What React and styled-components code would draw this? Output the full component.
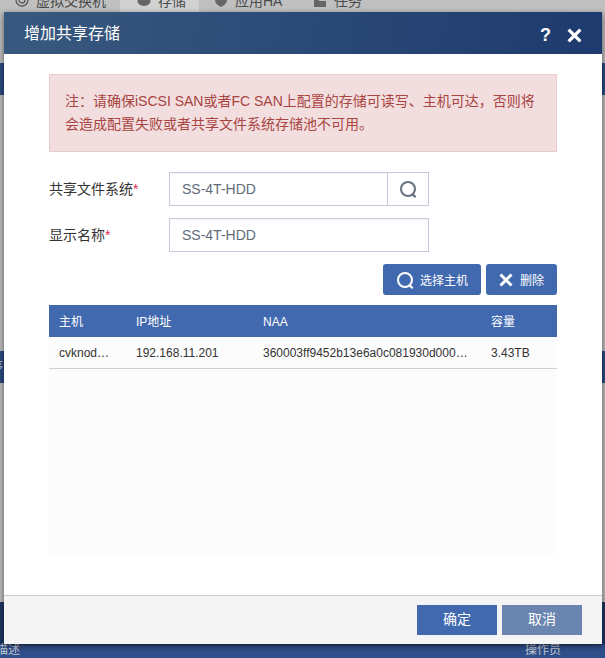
import React from 'react';
import styled, { createGlobalStyle } from 'styled-components';

const GlobalStyle = createGlobalStyle`
  html, body {
    margin: 0;
    padding: 0;
    height: 100%;
    overflow: hidden;
    background: #bdbdbd;
    font-family: "Liberation Sans", "Noto Sans CJK SC", sans-serif;
  }
  * {
    box-sizing: border-box;
  }
`;

const SearchIcon = ({ size = 18, color = '#fff' }) => (
  <svg width={size} height={size} viewBox="0 0 18 18" fill="none">
    <circle cx="9" cy="9" r="7" stroke={color} strokeWidth="2" />
    <path d="M13.5 14.2 L16 16.6" stroke={color} strokeWidth="2.2" strokeLinecap="round" />
  </svg>
);

const CrossIcon = ({ size = 14 }) => (
  <svg width={size} height={size} viewBox="0 0 14 14" fill="none">
    <path d="M1.5 1.5 L12.5 12.5 M12.5 1.5 L1.5 12.5" stroke="#fff" strokeWidth="3" />
  </svg>
);

const tabs = [
  { name: '虚拟交换机', icon: 'globe', width: 120 },
  { name: '存储', icon: 'disk', width: 79, active: true },
  { name: '应用HA', icon: 'shield', width: 99 },
  { name: '任务', icon: 'task', width: 80 },
];

const TabIcon = ({ kind }) => (
  <svg width="14" height="14" viewBox="0 0 14 14">
    {kind === 'globe' && (
      <>
        <circle cx="7" cy="7" r="6" fill="none" stroke="#5a5a5a" strokeWidth="1.3" />
        <circle cx="7" cy="7" r="3" fill="none" stroke="#5a5a5a" strokeWidth="1.3" />
      </>
    )}
    {kind === 'disk' && <ellipse cx="7" cy="8" rx="6.5" ry="5" fill="#666" />}
    {kind === 'shield' && <path d="M1 3 L7 1 L13 3 V7 Q13 11 7 14 Q1 11 1 7 Z" fill="#666" />}
    {kind === 'task' && <path d="M1 2 H6 V8 H13 V14 H1 Z" fill="#666" />}
  </svg>
);

const App = () => (
  <>
    <GlobalStyle />
    <Page>
      <TabBar>
        {tabs.map((tab) => (
          <Tab key={tab.name} $width={tab.width} $active={tab.active}>
            <TabIcon kind={tab.icon} />
            {tab.name}
          </Tab>
        ))}
      </TabBar>
      <Band $top={51} $height={32} />
      <Band $top={256} $height={32}>
        <BandText $left={-9} $top={8}>序</BandText>
      </Band>
      <Band $top={219} $height={56}>
        <BandFoot>
          <BandText $left={-4}>描述</BandText>
          <BandText $left={505}>操作员</BandText>
        </BandFoot>
      </Band>
    </Page>

    <Modal>
      <ModalHeader>
        <ModalTitle>增加共享存储</ModalTitle>
        <HeaderTools>
          <HelpMark>?</HelpMark>
          <CrossIcon size={15} />
        </HeaderTools>
      </ModalHeader>

      <ModalBody>
        <Notice>
          注：请确保iSCSI SAN或者FC SAN上配置的存储可读写、主机可达，否则将会造成配置失败或者共享文件系统存储池不可用。
        </Notice>

        <FormRow>
          <FieldLabel>
            共享文件系统<Required>*</Required>
          </FieldLabel>
          <InputGroup>
            <TextInput readOnly value="SS-4T-HDD" />
            <SearchAddon>
              <SearchIcon color="#66707f" />
            </SearchAddon>
          </InputGroup>
        </FormRow>

        <FormRow>
          <FieldLabel>
            显示名称<Required>*</Required>
          </FieldLabel>
          <InputGroup>
            <TextInput readOnly value="SS-4T-HDD" />
          </InputGroup>
        </FormRow>

        <Actions>
          <ActionButton $width={98} $gap={6}>
            <SearchIcon size={18} />
            选择主机
          </ActionButton>
          <ActionButton $width={71} $gap={7}>
            <CrossIcon />
            删除
          </ActionButton>
        </Actions>

        <TableBox>
          <HostTable>
            <colgroup>
              <col width="77" />
              <col width="127" />
              <col width="228" />
              <col width="76" />
            </colgroup>
            <thead>
              <tr>
                <HeadCell>主机</HeadCell>
                <HeadCell>IP地址</HeadCell>
                <HeadCell>NAA</HeadCell>
                <HeadCell>容量</HeadCell>
              </tr>
            </thead>
            <tbody>
              <tr>
                <BodyCell>cvknode01</BodyCell>
                <BodyCell>192.168.11.201</BodyCell>
                <BodyCell>360003ff9452b13e6a0c081930d000000000</BodyCell>
                <BodyCell>3.43TB</BodyCell>
              </tr>
            </tbody>
          </HostTable>
        </TableBox>
      </ModalBody>

      <ModalFooter>
        <FooterButton>确定</FooterButton>
        <FooterButton $muted>取消</FooterButton>
      </ModalFooter>
    </Modal>
  </>
);

const Page = styled.div`
  display: flex;
  flex-direction: column;
  height: 658px;
  overflow: hidden;
  background: #bcbcbc;
`;

const TabBar = styled.div`
  display: flex;
  flex: none;
  height: 12px;
  padding-left: 14px;
  overflow: hidden;
  background: #c0c0c0;
`;

const Tab = styled.div`
  display: flex;
  flex: none;
  align-items: center;
  gap: 7px;
  width: ${(props) => props.$width}px;
  height: 24px;
  margin-top: -12px;
  padding-left: ${(props) => (props.$active ? 17 : 1)}px;
  margin-left: ${(props) => (props.$active ? -14 : 0)}px;
  margin-right: ${(props) => (props.$active ? 14 : 0)}px;
  color: #4a4a4a;
  font-size: 14px;
  background: ${(props) => (props.$active ? '#d2d2d2' : 'transparent')};
`;

const Band = styled.div`
  flex: none;
  height: ${(props) => props.$height}px;
  margin-top: ${(props) => props.$top}px;
  overflow: hidden;
  background: #2a4a80;
`;

const BandFoot = styled.div`
  display: flex;
  align-items: flex-end;
  height: 100%;
  background: linear-gradient(#1f3561 0, #1f3561 74%, #2f4f8b 78%);
`;

const BandText = styled.span`
  display: block;
  margin-left: ${(props) => props.$left}px;
  margin-top: ${(props) => props.$top || 0}px;
  color: #c4cad6;
  font-size: 12px;
  line-height: 16px;
`;

const Modal = styled.div`
  position: absolute;
  top: 12px;
  left: 4px;
  display: flex;
  flex-direction: column;
  width: 598px;
  height: 632px;
  background: #fff;
  box-shadow: 0 2px 6px rgba(0, 0, 0, 0.55);
`;

const ModalHeader = styled.div`
  display: flex;
  flex: none;
  align-items: center;
  justify-content: space-between;
  height: 42px;
  padding: 0 20px;
  background: linear-gradient(100deg, #38597f 0%, #1e3a6e 100%);
`;

const ModalTitle = styled.div`
  margin-bottom: 3px;
  color: #fff;
  font-size: 16px;
`;

const HeaderTools = styled.div`
  display: flex;
  align-items: center;
  gap: 16px;
  margin-top: 4px;
`;

const HelpMark = styled.span`
  color: #fff;
  font-size: 18px;
  font-weight: 700;
  line-height: 18px;
`;

const ModalBody = styled.div`
  flex: 1;
  padding: 20px 45px 0;
`;

const Notice = styled.div`
  height: 78px;
  padding: 15px 15px 0;
  color: #a94442;
  font-size: 14px;
  line-height: 23px;
  background: #f2dede;
  border: 1px solid #e8ccd0;
`;

const FormRow = styled.div`
  display: flex;
  align-items: center;
  height: 34px;
  margin-top: 12px;

  ${Notice} + & {
    margin-top: 20px;
  }
`;

const FieldLabel = styled.div`
  width: 120px;
  padding-bottom: 1px;
  color: #333;
  font-size: 14px;
  line-height: 20px;
`;

const Required = styled.span`
  color: #d9304f;
`;

const InputGroup = styled.div`
  display: flex;
  width: 260px;
  height: 34px;
  border: 1px solid #c9c9dc;
`;

const TextInput = styled.input`
  flex: 1;
  min-width: 0;
  padding: 0 12px;
  color: #5f6b7a;
  font-family: inherit;
  font-size: 14px;
  border: none;
  outline: none;
  box-shadow: inset 0 1px 1px rgba(0, 0, 0, 0.05);
`;

const SearchAddon = styled.div`
  display: flex;
  flex: none;
  align-items: center;
  justify-content: center;
  width: 41px;
  border-left: 1px solid #c9c9dc;
`;

const Actions = styled.div`
  display: flex;
  justify-content: flex-end;
  gap: 5px;
  margin-top: 12px;
`;

const ActionButton = styled.button`
  display: flex;
  align-items: center;
  gap: ${(props) => props.$gap}px;
  width: ${(props) => props.$width}px;
  height: 31px;
  padding: 0 0 0 13px;
  color: #fff;
  font-family: inherit;
  font-size: 12px;
  background: #4169b0;
  border: none;
  border-radius: 3px;
`;

const TableBox = styled.div`
  height: 249px;
  margin-top: 10px;
  background: #fcfcfc;
`;

const HostTable = styled.table`
  width: 100%;
  table-layout: fixed;
  border-collapse: collapse;
`;

const HeadCell = styled.th`
  height: 32px;
  padding: 1px 10px 0;
  color: #fff;
  font-size: 12px;
  font-weight: 400;
  line-height: 16px;
  text-align: left;
  background: #4169b0;
`;

const BodyCell = styled.td`
  height: 31px;
  padding: 1px 10px 0;
  overflow: hidden;
  color: #333;
  font-size: 12px;
  line-height: 16px;
  white-space: nowrap;
  text-overflow: ellipsis;
  border-bottom: 1px solid #d0d0d0;

  &:first-child {
    padding-right: 14px;
  }

  &:nth-child(3) {
    padding-right: 13px;
  }
`;

const ModalFooter = styled.div`
  display: flex;
  flex: none;
  justify-content: flex-end;
  gap: 5px;
  height: 49px;
  padding: 9px 20px 0 0;
  background: #f4f4f4;
  border-top: 1px solid #cccccc;
`;

const FooterButton = styled.button`
  width: 80px;
  height: 30px;
  padding: 0 0 2px;
  color: #fff;
  font-family: inherit;
  font-size: 14px;
  line-height: 20px;
  background: ${(props) => (props.$muted ? '#6a85b0' : '#4169b0')};
  border: none;
`;

export default App;
